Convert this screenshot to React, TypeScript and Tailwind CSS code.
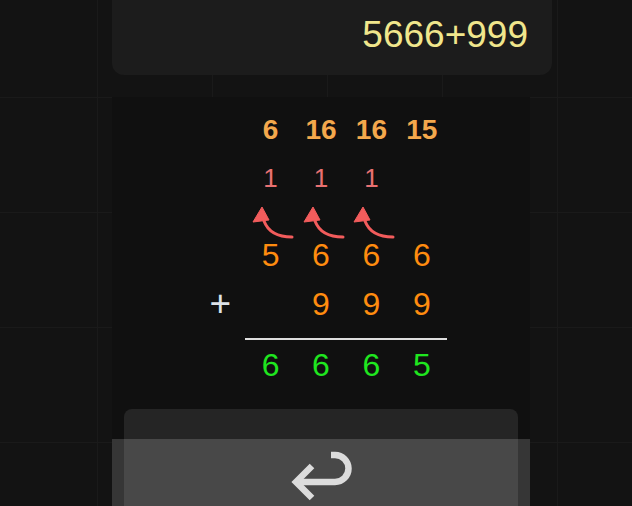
import React from 'react'

const sums = ['6', '16', '16', '15']
const carries = ['1', '1', '1', '']
const first = ['5', '6', '6', '6']
const second = ['', '9', '9', '9']
const result = ['6', '6', '6', '5']

const font = { fontFamily: '"Liberation Sans", Arial, sans-serif' }

// curved carry arrow, tail on the right, head pointing up-left
const CarryArrow = () => (
    <svg width="50" height="38" viewBox="0 0 50 38" className="block">
        <path d="M19 19 Q25 35 47 35" fill="none" stroke="#f25c5c" strokeWidth="3" strokeLinecap="round" />
        <polygon points="17,5 8,20 24,18" fill="#f25c5c" stroke="#f25c5c" strokeWidth="1" strokeLinejoin="round" />
    </svg>
)

const ReturnIcon = () => (
    <svg width="64" height="56" viewBox="0 0 64 56" className="block">
        <path d="M8 32 H46 A13.5 13.5 0 0 0 46 5 H42" fill="none" stroke="#dcdcdc" strokeWidth="6.5" />
        <path d="M23 16 L7 32 L23 48" fill="none" stroke="#dcdcdc" strokeWidth="6.5" strokeLinejoin="miter" />
    </svg>
)

const Row = ({ children, className }: { children: React.ReactNode, className?: string }) => (
    <div className={`grid grid-cols-5 w-[252px] mx-auto ${className ?? ''}`}>{children}</div>
)

const App = () => {
    return <div style={font} className="h-screen overflow-hidden bg-[#131313] bg-[linear-gradient(to_right,#1a1a1a_1px,transparent_1px),linear-gradient(to_bottom,#1a1a1a_1px,transparent_1px)] bg-[size:115px_115px] bg-[position:97px_97px]">
        <div className="ml-[112px] w-[418px] h-full flex flex-col">
            {/* expression */}
            <div className="w-[440px] h-[75px] shrink-0 rounded-b-xl bg-[#1c1c1c] flex items-center justify-end pr-[24px] pb-[7px]">
                <span className="text-[37px] text-[#f0e68c] leading-none">5666+999</span>
            </div>

            {/* column addition */}
            <div className="mt-[22px] flex-1 bg-[#101010] pt-[9px] flex flex-col">
                <Row className="h-[48px] items-center">
                    <div />
                    {sums.map((s, i) => <div key={i} className="text-center text-[28px] font-bold text-[#f4a84c]">{s}</div>)}
                </Row>
                <Row className="h-[48px] items-center">
                    <div />
                    {carries.map((c, i) => <div key={i} className="text-center text-[26px] text-[#e87171]">{c}</div>)}
                </Row>
                <Row className="h-[38px]">
                    <div />
                    {carries.map((c, i) => <div key={i}>{c && <CarryArrow />}</div>)}
                </Row>
                <Row className="h-[30px] items-center">
                    <div />
                    {first.map((d, i) => <div key={i} className="text-center text-[32px] leading-[30px] text-[#ff8c0f]">{d}</div>)}
                </Row>
                <Row className="h-[68px] items-center">
                    <div className="text-center text-[37px] text-[#dde2e8]">+</div>
                    {second.map((d, i) => <div key={i} className="text-center text-[32px] text-[#ff8c0f]">{d}</div>)}
                </Row>
                <Row>
                    <div />
                    <div className="col-span-4 h-[2px] bg-[#dedede]" />
                </Row>
                <Row className="h-[50px] items-center">
                    <div />
                    {result.map((d, i) => <div key={i} className="text-center text-[32px] text-[#1fe61f]">{d}</div>)}
                </Row>

                {/* keypad area */}
                <div className="mt-[19px] mx-3 flex-1 rounded-t-lg bg-[#252525]" />
            </div>
        </div>

        {/* bottom action bar */}
        <div className="fixed top-[439px] left-[112px] w-[418px] h-[80px] bg-white/[0.16] flex justify-center pt-[11px]">
            <ReturnIcon />
        </div>
    </div>
}

export default App
